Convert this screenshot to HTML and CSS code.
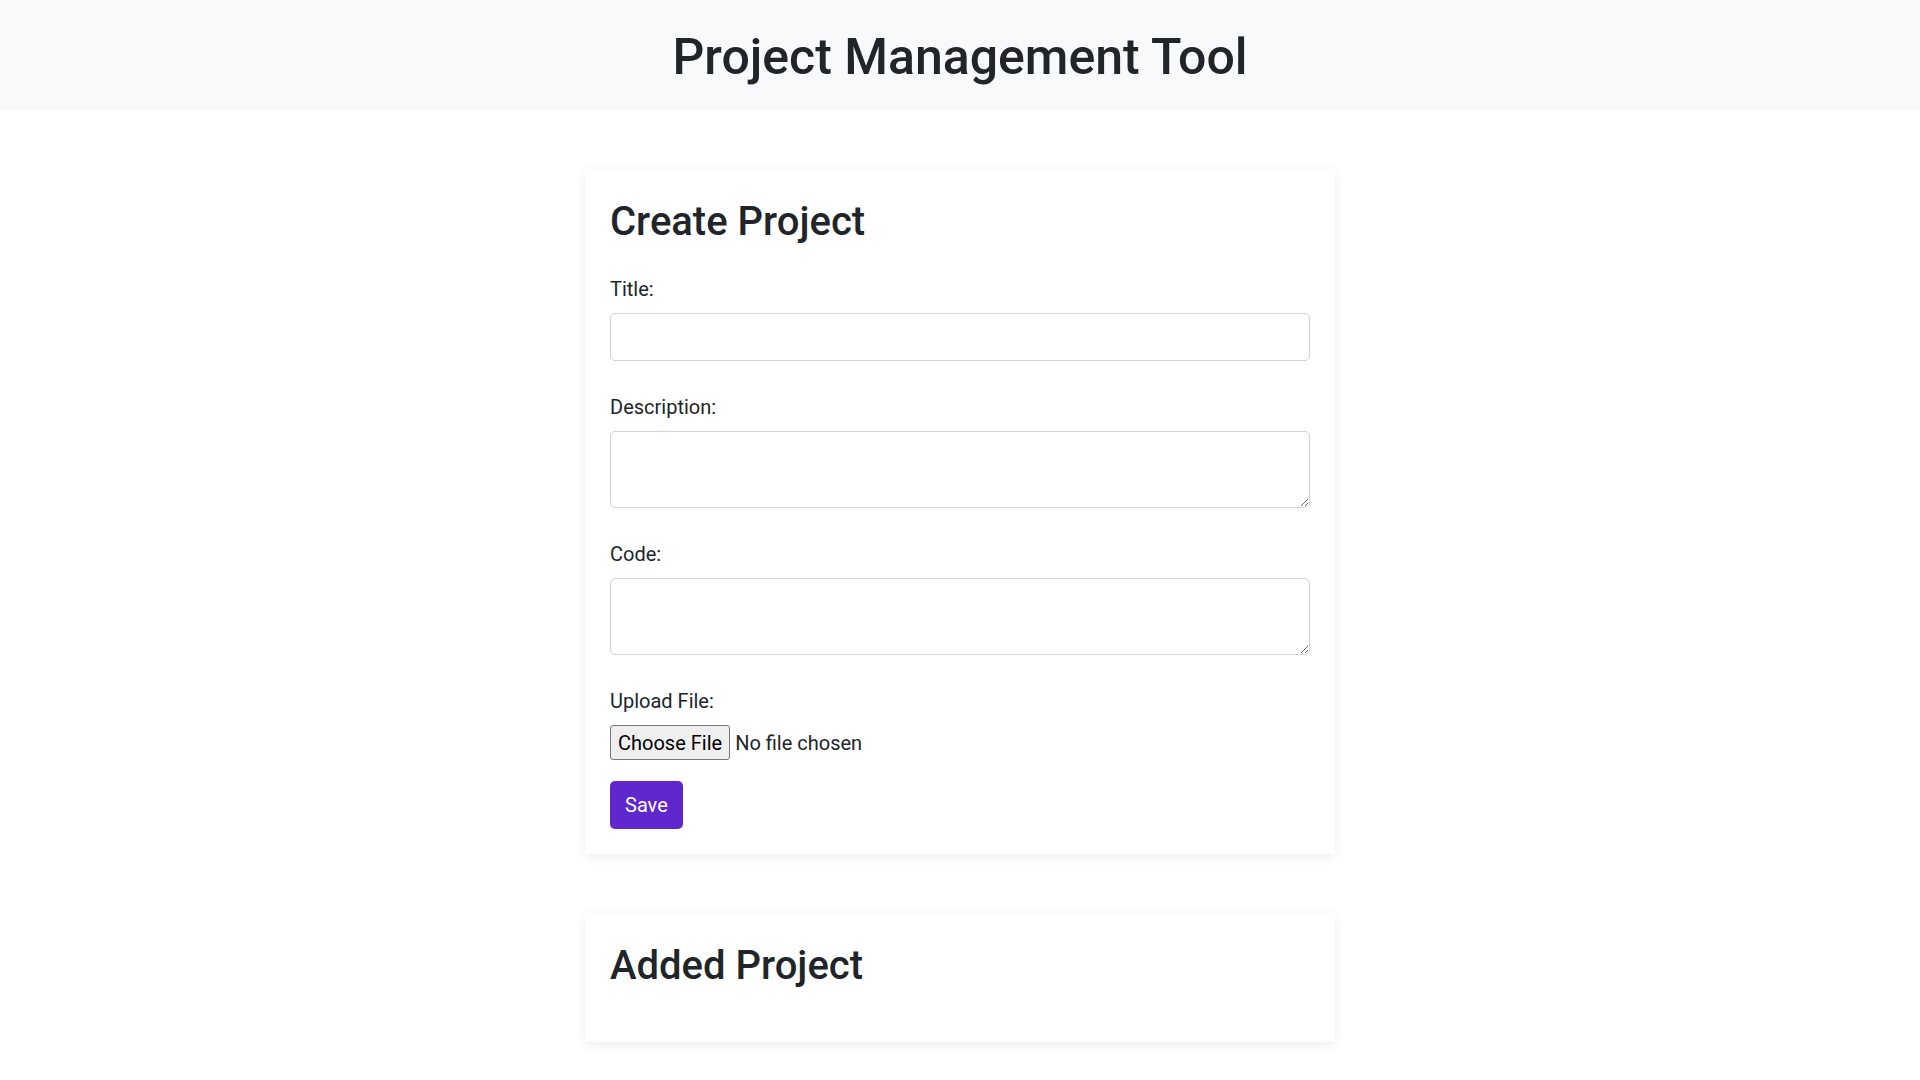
FILE: index.html
```html
<!DOCTYPE html>
<html lang="en">
<head>
<meta charset="utf-8">
<title>Project Management Tool</title>
<link rel="stylesheet" href="styles.css">
</head>
<body>
<header class="app-header">
  <h1 class="app-title">Project Management Tool</h1>
</header>
<main class="container">
  <section class="card">
    <h2 class="card-title">Create Project</h2>
    <form class="project-form">
      <div class="field">
        <label class="field-label" for="title">Title:</label>
        <input class="field-input" id="title" type="text">
      </div>
      <div class="field">
        <label class="field-label" for="description">Description:</label>
        <textarea class="field-input field-area" id="description" rows="2"></textarea>
      </div>
      <div class="field">
        <label class="field-label" for="code">Code:</label>
        <textarea class="field-input field-area" id="code" rows="2"></textarea>
      </div>
      <div class="field field-file">
        <label class="field-label" for="file">Upload File:</label>
        <input class="file-input" id="file" type="file">
      </div>
      <button class="btn-save" type="button">Save</button>
    </form>
  </section>
  <section class="card">
    <h2 class="card-title">Added Project</h2>
  </section>
</main>
</body>
</html>
```
FILE: styles.css
```css
html, body {
  margin: 0;
  padding: 0;
  background: #ffffff;
}
body {
  font-family: "Segoe UI", Roboto, "Helvetica Neue", Arial, sans-serif;
  font-size: 20px;
  line-height: 1.5;
  color: #212529;
}
.app-header {
  background: #f8f9fa;
  padding: 27px 0 20px;
  text-align: center;
}
.app-title {
  margin: 0 0 3px;
  font-size: 50px;
  line-height: 60px;
  font-weight: 500;
}
.container {
  width: 750px;
  margin: 60px auto 40px;
  display: flex;
  flex-direction: column;
  gap: 60px;
}
.card {
  background: #ffffff;
  padding: 25px;
  box-shadow: 0 2px 10px rgba(0, 0, 0, 0.08);
}
.card-title {
  margin: 0 0 27px;
  padding-top: 3px;
  font-size: 40px;
  line-height: 48px;
  font-weight: 500;
}
.project-form {
  display: flex;
  flex-direction: column;
  align-items: flex-start;
}
.field {
  width: 100%;
  margin-bottom: 30px;
}
.field-label {
  display: block;
  margin-bottom: 10px;
  line-height: 30px;
  position: relative;
  top: 1px;
}
.field-input {
  display: block;
  width: 100%;
  box-sizing: border-box;
  height: 48px;
  padding: 7.5px 15px;
  border: 1px solid #ced4da;
  border-radius: 5px;
  font: inherit;
  color: #495057;
  background: #ffffff;
}
.field-area {
  height: 77px;
  resize: vertical;
}
.field-file {
  margin-bottom: 21px;
}
.file-input {
  display: block;
  font: inherit;
  line-height: 35px;
  height: 35px;
  color: #212529;
}
.file-input::file-selector-button {
  font: inherit;
  height: 35px;
  padding: 0 7px;
  margin-right: 5px;
  border: 1px solid #767676;
  border-radius: 3px;
  background: #efefef;
  color: #000000;
}
.btn-save {
  background: #5f27cd;
  color: #ffffff;
  border: none;
  border-radius: 5px;
  padding: 8.75px 15px;
  font: inherit;
  line-height: 30px;
  cursor: pointer;
}
```
